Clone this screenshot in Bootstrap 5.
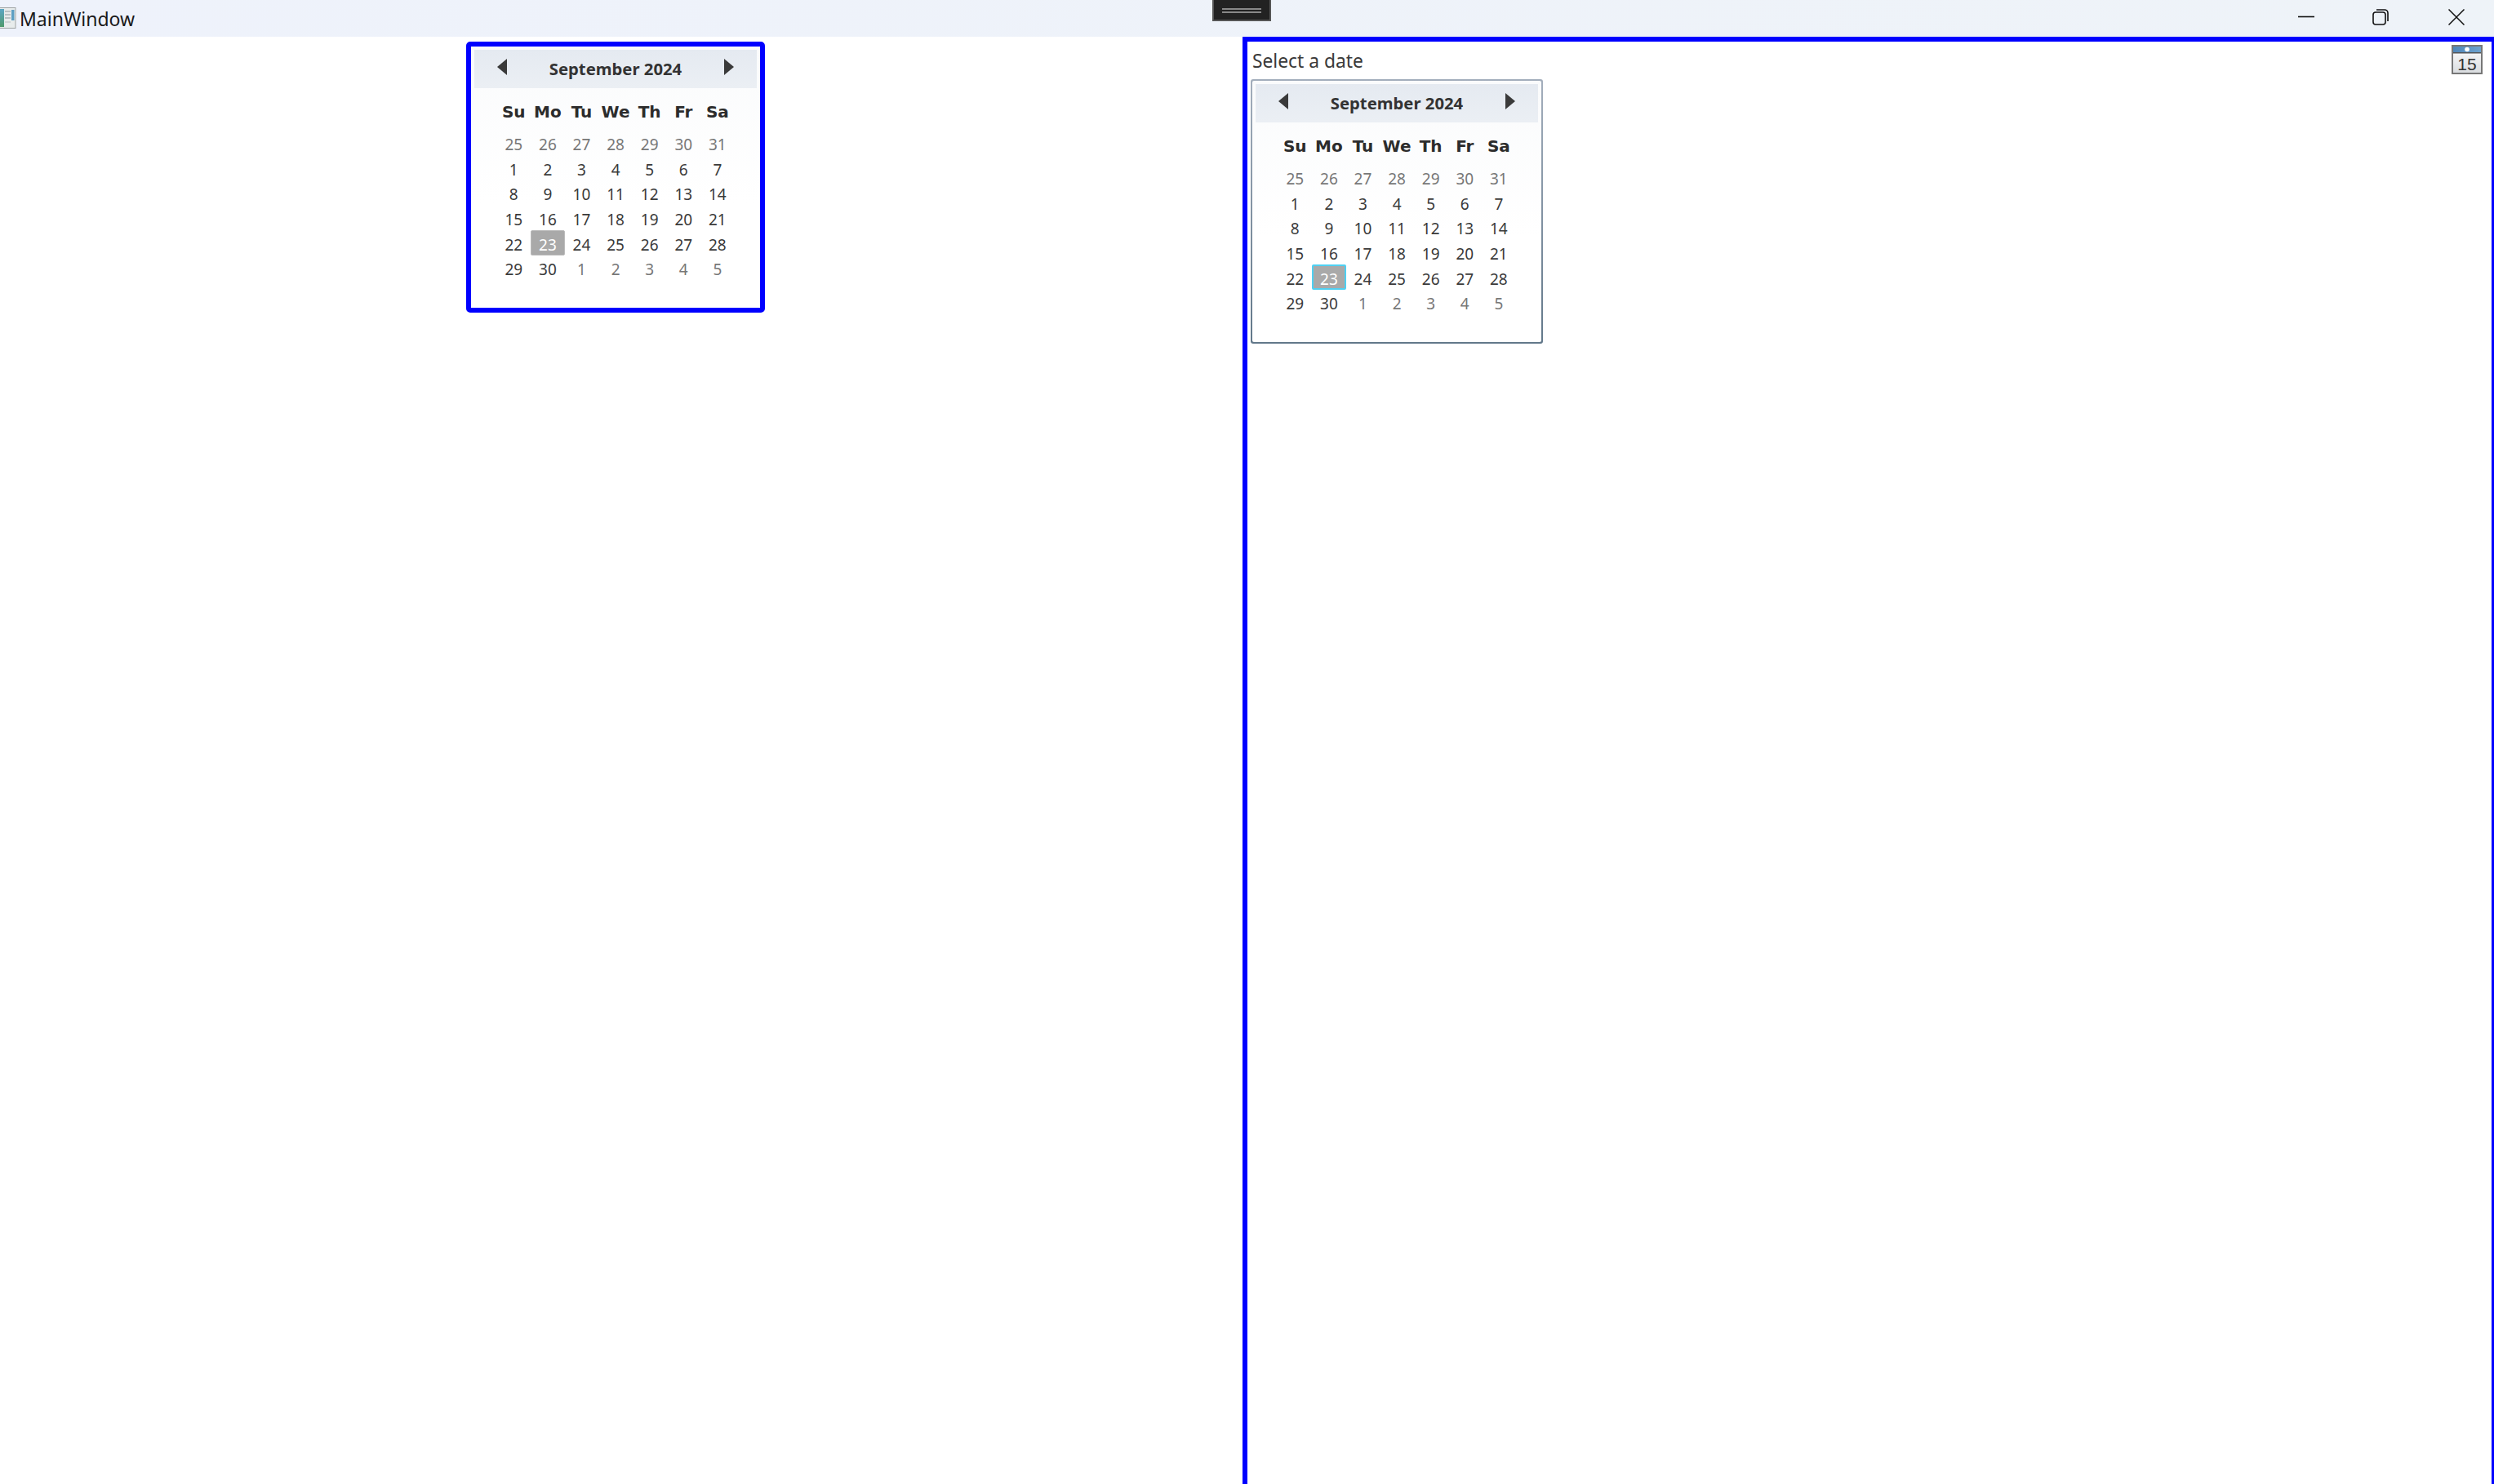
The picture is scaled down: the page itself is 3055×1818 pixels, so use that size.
<!DOCTYPE html>
<html lang="en">
<head>
  <meta charset="UTF-8" />
  <title>MainWindow</title>
  <link href="https://cdn.jsdelivr.net/npm/bootstrap@5.3.3/dist/css/bootstrap.min.css" rel="stylesheet" />
  <style>
    html, body { height: 100%; overflow: hidden; background: #fff; }
    body { font-family: "Noto Sans", "Open Sans", sans-serif; color: #3a3a3a; }
    .titlebar { height: 45px; background: linear-gradient(to right, #eef2fb, #eef3f8); position: relative; }
    .win-title { font-size: 23px; color: #1a1a1a; line-height: 47px; margin-left: 4px; }
    .win-icon { width: 20px; height: 26px; margin-top: 9px; flex: none; }
    .dbg-grip { position: absolute; left: 1485px; top: 0; width: 72px; height: 26px; background: #222; border: 2px solid #555; border-top: 0; }
    .dbg-grip::before { content: ""; position: absolute; left: 10px; right: 10px; top: 10px; height: 6px; border-top: 2px solid #888; border-bottom: 2px solid #888; }
    .win-btn { position: absolute; top: 11px; width: 20px; height: 20px; }
    .win-min { left: 2815px; } .win-max { left: 2906px; } .win-close { left: 2999px; }
    .main-area { height: calc(100vh - 45px); }
    .left-col { width: 1522px; flex: none; padding-top: 6px; padding-right: 14px; }
    .right-panel { width: 1536px; flex: none; border: 6px solid #00f; border-bottom: 0; padding: 4px 11px 0 4px; }
    .cal-blue { width: 366px; height: 332px; border: 6px solid #00f; border-radius: 5px; }
    .cal-framed { width: 358px; height: 324px; padding: 2px; border-radius: 3px; background: linear-gradient(to bottom, #a3aebc, #62788a); margin-top: 6px; }
    .cal-face { height: 100%; background: linear-gradient(to bottom, #fafbfc, #fff 60%); padding: 4px; }
    .cal-framed .cal-face { border-radius: 2px; }
    .cal-head { height: 47px; background: linear-gradient(to bottom, #e5eaf1, #ebeff4); padding: 11px 28px 0; }
    .cal-head b { font-size: 20.300px; line-height: 24px; font-weight: 700; color: #333; }
    .arr-l, .arr-r { width: 0; height: 0; border-top: 10px solid transparent; border-bottom: 10px solid transparent; }
    .arr-l { border-right: 12px solid #3a3a3a; }
    .arr-r { border-left: 12px solid #3a3a3a; }
    .cal-grid { display: grid; grid-template-columns: repeat(7, 41.6px); padding-left: 27.500px; }
    .dow-row { margin-top: 14px; height: 30px; font-family: "DejaVu Sans", sans-serif; font-weight: 700; font-size: 20px; line-height: 30px; text-align: center; color: #2c2c2c; }
    /* row heights are uneven in the original, WPF rounding */
    .day-rows { margin-top: 8px; grid-template-rows: 30px 31px 30px 31px 31px 30px; font-size: 19px; line-height: 1; }
    .day-rows > div { display: flex; align-items: center; justify-content: center; padding-top: 5px; }
    .day-out { color: #777; }
    .day-rows > .day-sel { background: #a9a9a9; color: #fff; border: 1px solid #bbb; border-radius: 2px; }
    .cal-framed .day-rows > .day-sel { border: 2px solid #4fd0f2; }
    .date-lbl { font-size: 22.800px; line-height: 32px; padding-left: 2px; padding-top: 4px; }
    .date-icon { width: 38px; height: 36px; display: block; }
  </style>
</head>
<body>

<div class="titlebar d-flex">
  <svg class="win-icon" viewBox="0 0 20 26">
    <defs>
      <linearGradient id="iconTeal" x1="0" y1="0" x2="0" y2="1"><stop offset="0" stop-color="#5aa6c4" /><stop offset="1" stop-color="#4f9a6c" /></linearGradient>
    </defs>
    <rect x="-6" y=".5" width="25" height="25" fill="#e8ecec" stroke="#a0a4a4" />
    <rect x="0" y="2" width="5" height="22" fill="url(#iconTeal)" />
    <rect x="6" y="4" width="7" height="2" fill="#b9c2c4" />
    <rect x="6" y="8" width="7" height="2" fill="#b9c2c4" />
    <rect x="6" y="12" width="7" height="2" fill="#b9c2c4" />
    <rect x="6" y="17" width="7" height="2" fill="#cfd5d6" />
    <rect x="14" y="3" width="3.500" height="13" fill="#5d9fc4" />
  </svg>
  <span class="win-title">MainWindow</span>
  <div class="dbg-grip"></div>
  <svg class="win-btn win-min" viewBox="0 0 20 20"><path d="M0 9.500h20" stroke="#111" stroke-width="1.600" /></svg>
  <svg class="win-btn win-max" viewBox="0 0 20 20" fill="none" stroke="#111" stroke-width="1.600">
    <rect x="1" y="4" width="15" height="15" rx="3" />
    <path d="M5 1h10a4 4 0 0 1 4 4v10" />
  </svg>
  <svg class="win-btn win-close" viewBox="0 0 20 20"><path d="M.5.5l19 19M19.500.5l-19 19" stroke="#111" stroke-width="1.500" /></svg>
</div>

<div class="main-area d-flex">
  <div class="left-col d-flex justify-content-center align-items-start">
    <div class="cal-blue"><div class="cal-mount cal-face"></div></div>
  </div>

  <div class="right-panel">
    <div class="d-flex justify-content-between align-items-start">
      <div class="date-lbl">Select a date</div>
      <svg class="date-icon" viewBox="0 0 38 36">
        <defs>
          <linearGradient id="calTop" x1="0" y1="0" x2="1" y2="0"><stop offset="0" stop-color="#4f86b8" /><stop offset="1" stop-color="#6ea3cf" /></linearGradient>
          <linearGradient id="calBody" x1="0" y1="0" x2="0" y2="1"><stop offset="0" stop-color="#fff" /><stop offset="1" stop-color="#d9dcdf" /></linearGradient>
        </defs>
        <rect x="1" y="1" width="36" height="34" fill="url(#calBody)" stroke="#777" stroke-width="2" />
        <rect x="2" y="2" width="34" height="7" fill="url(#calTop)" />
        <rect x="2" y="9" width="34" height="1.500" fill="#555" />
        <circle cx="19" cy="5.500" r="2.800" fill="#fff" />
        <text x="19" y="31" text-anchor="middle" font-family="Liberation Sans, sans-serif" font-size="21" fill="#333">15</text>
      </svg>
    </div>
    <div class="cal-framed"><div class="cal-mount cal-face"></div></div>
  </div>
</div>

<script>
  // September 2024 page: 6 rows, starts on Sunday 25 Aug
  const dows = ["Su", "Mo", "Tu", "We", "Th", "Fr", "Sa"];

  function calHtml() {
    let days = "";
    for (let i = 0; i < 42; i++) {
      const d = new Date(2024, 7, 25 + i);
      const cls = d.getMonth() !== 8 ? "day-out" : (d.getDate() === 23 ? "day-sel" : "");
      days += `<div class="${cls}">${d.getDate()}</div>`;
    }
    return `
      <div class="cal-head d-flex justify-content-between align-items-start">
        <div class="arr-l"></div><b>September 2024</b><div class="arr-r"></div>
      </div>
      <div class="cal-grid dow-row">${dows.map(x => `<div>${x}</div>`).join("")}</div>
      <div class="cal-grid day-rows">${days}</div>`;
  }

  document.querySelectorAll(".cal-mount").forEach(el => { el.innerHTML = calHtml(); });
</script>

<script src="https://cdn.jsdelivr.net/npm/bootstrap@5.3.3/dist/js/bootstrap.bundle.min.js"></script>
</body>
</html>
